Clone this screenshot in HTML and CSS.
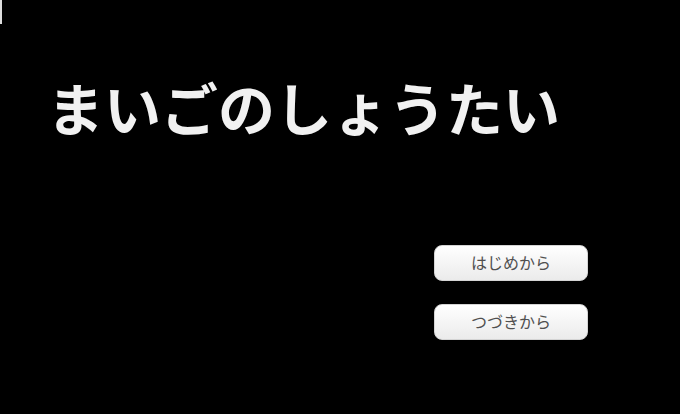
FILE: index.html
```html
<!DOCTYPE html>
<html lang="ja">
<head>
<meta charset="utf-8">
<meta name="viewport" content="width=device-width, initial-scale=1">
<title>まいごのしょうたい</title>
<link rel="stylesheet" href="styles.css">
</head>
<body>
<main class="screen">
  <span class="edge-mark" aria-hidden="true"></span>
  <h1 class="title">まいごのしょうたい</h1>
  <nav class="menu">
    <button class="menu-button" type="button">はじめから</button>
    <button class="menu-button" type="button">つづきから</button>
  </nav>
</main>
</body>
</html>
```

FILE: styles.css
```css
* {
  box-sizing: border-box;
}

body {
  margin: 0;
  background: #000;
  font-family: "Noto Sans CJK JP", sans-serif;
}

.screen {
  position: relative;
  display: flex;
  flex-direction: column;
  justify-content: space-between;
  min-height: 100vh;
  padding: 74px 92px 74px 47px;
}

.edge-mark {
  position: absolute;
  top: 0;
  left: 0;
  width: 2px;
  height: 24px;
  background: #ddd;
}

.title {
  margin: 0;
  color: #f1f1f1;
  font-size: 57px;
  font-weight: 700;
  line-height: 64px;
  white-space: nowrap;
}

.menu {
  display: flex;
  flex-direction: column;
  align-self: flex-end;
  gap: 23px;
}

.menu-button {
  width: 154px;
  height: 36px;
  padding: 0 0 2px;
  border: 1px solid #d4d4d4;
  border-radius: 8px;
  background: linear-gradient(#fff, #ebebeb);
  color: #505050;
  font-family: inherit;
  font-size: 16px;
  line-height: 24px;
}
```
